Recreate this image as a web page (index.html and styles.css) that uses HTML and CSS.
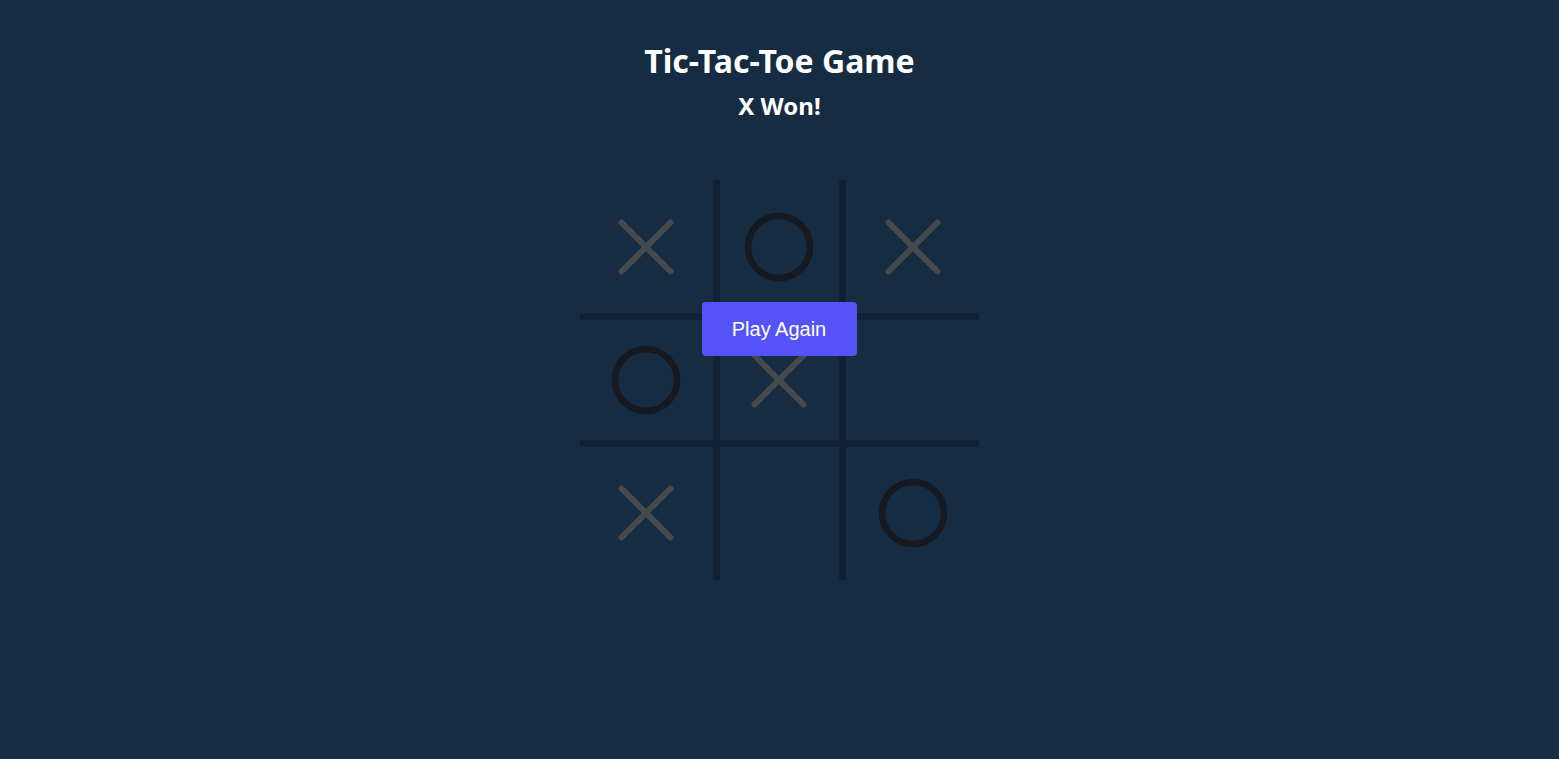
FILE: index.html
```html
<!DOCTYPE html>
<html lang="en">
<head>
<meta charset="utf-8">
<title>Tic-Tac-Toe Game</title>
<link rel="stylesheet" href="styles.css">
</head>
<body>
<main class="app">
  <h1 class="title">Tic-Tac-Toe Game</h1>
  <h2 class="status">X Won!</h2>
  <div class="board-wrap">
    <div class="board">
      <div class="cell"><svg class="mark" viewBox="0 0 80 80"><path class="x" d="M15.5 15.5 L64.5 64.5 M64.5 15.5 L15.5 64.5"/></svg></div>
      <div class="cell col-mid"><svg class="mark" viewBox="0 0 80 80"><circle class="o" cx="40" cy="40" r="31"/></svg></div>
      <div class="cell"><svg class="mark" viewBox="0 0 80 80"><path class="x" d="M15.5 15.5 L64.5 64.5 M64.5 15.5 L15.5 64.5"/></svg></div>
      <div class="cell row-mid"><svg class="mark" viewBox="0 0 80 80"><circle class="o" cx="40" cy="40" r="31"/></svg></div>
      <div class="cell col-mid row-mid"><svg class="mark" viewBox="0 0 80 80"><path class="x" d="M15.5 15.5 L64.5 64.5 M64.5 15.5 L15.5 64.5"/></svg></div>
      <div class="cell row-mid"></div>
      <div class="cell"><svg class="mark" viewBox="0 0 80 80"><path class="x" d="M15.5 15.5 L64.5 64.5 M64.5 15.5 L15.5 64.5"/></svg></div>
      <div class="cell col-mid"></div>
      <div class="cell"><svg class="mark" viewBox="0 0 80 80"><circle class="o" cx="40" cy="40" r="31"/></svg></div>
    </div>
    <button class="again" type="button">Play Again</button>
  </div>
</main>
</body>
</html>
```

FILE: styles.css
```css
html, body {
  margin: 0;
  padding: 0;
}
body {
  background: #162c42;
  color: #ffffff;
  min-height: 759px;
  font-family: "Noto Sans", "Open Sans", sans-serif;
}
.app {
  display: flex;
  flex-direction: column;
  align-items: center;
  padding-top: 40px;
}
.title {
  margin: 0;
  font-size: 32px;
  line-height: 42px;
  font-weight: 700;
}
.status {
  margin: 0;
  margin-top: 2px;
  font-size: 24px;
  line-height: 44px;
  font-weight: 700;
}
.board-wrap {
  position: relative;
  margin-top: 52px;
  width: 400px;
  height: 400px;
}
.board {
  display: grid;
  grid-template-columns: repeat(3, 1fr);
  grid-template-rows: repeat(3, 1fr);
  width: 400px;
  height: 400px;
}
.cell {
  box-sizing: border-box;
  display: flex;
  align-items: center;
  justify-content: center;
}
.col-mid {
  border-left: 7px solid #0f2133;
  border-right: 7px solid #0f2133;
}
.row-mid {
  border-top: 7px solid #0f2133;
  border-bottom: 7px solid #0f2133;
}
.mark {
  width: 80px;
  height: 80px;
}
.x {
  stroke: #474a4d;
  stroke-width: 6;
  stroke-linecap: round;
  fill: none;
}
.o {
  stroke: #16191f;
  stroke-width: 6.5;
  fill: none;
}
.again {
  position: absolute;
  top: 122px;
  left: 122px;
  width: 155px;
  height: 54px;
  border: none;
  border-radius: 4px;
  background: #5553f7;
  color: #ffffff;
  font-family: "Liberation Sans", Arial, sans-serif;
  font-size: 20px;
  cursor: pointer;
}
```
